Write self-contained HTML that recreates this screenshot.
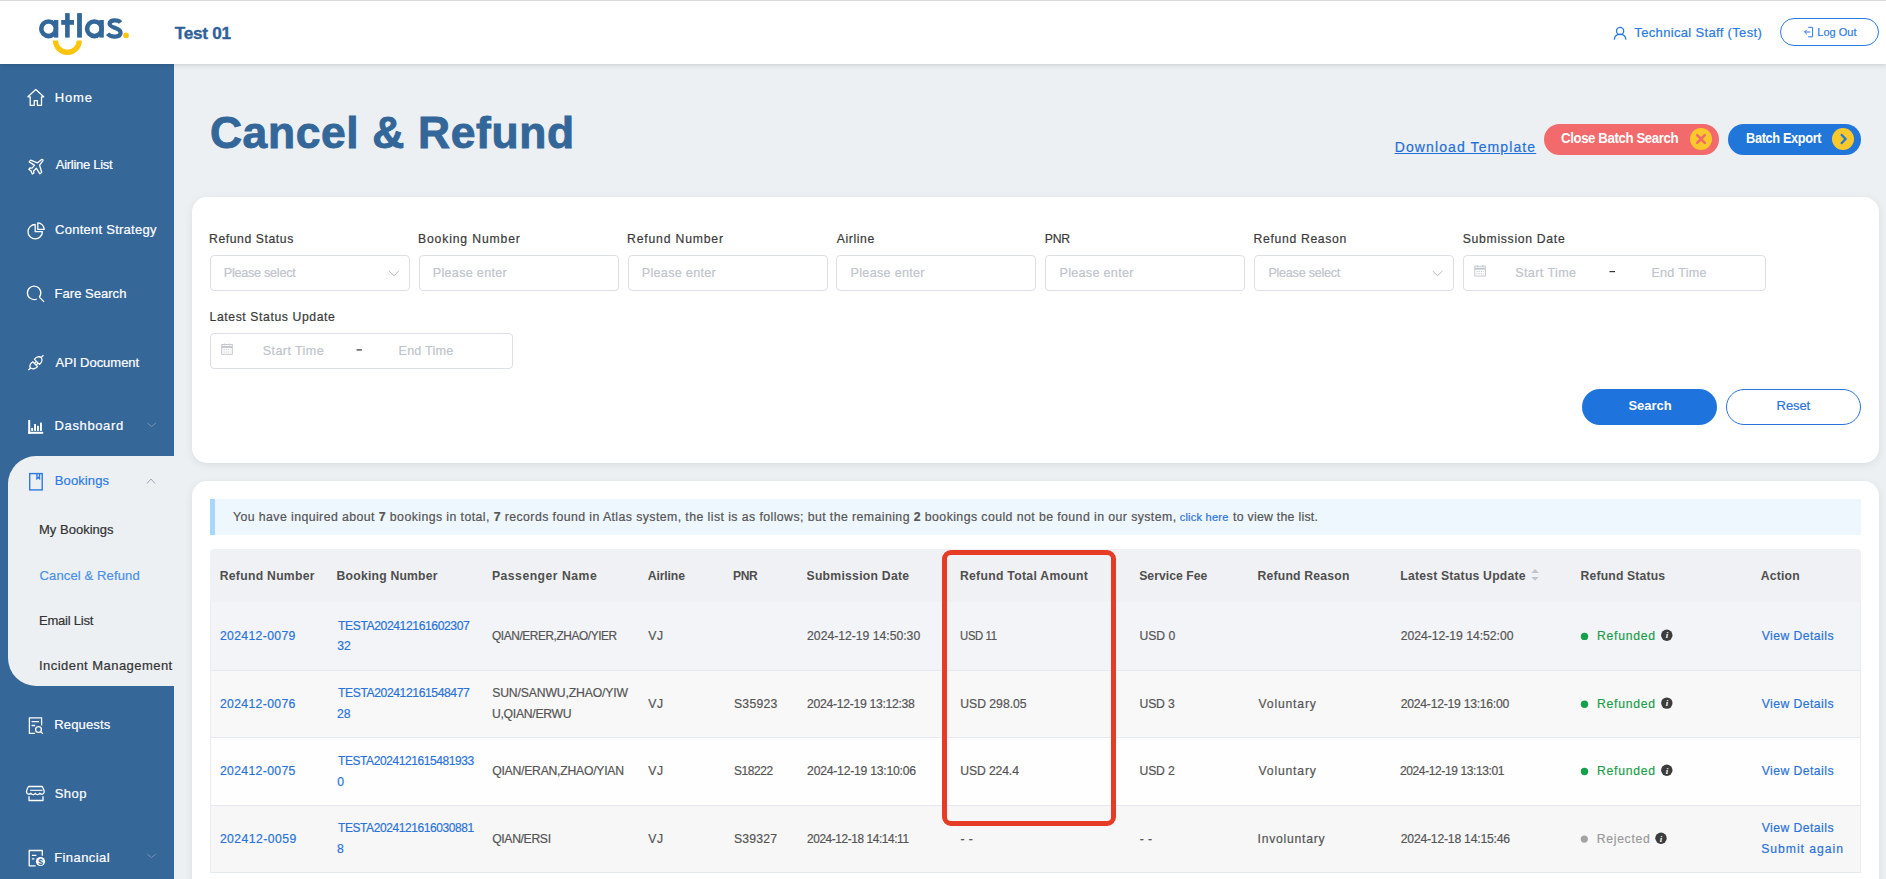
<!DOCTYPE html>
<html><head><meta charset="utf-8">
<style>
*{box-sizing:border-box;margin:0;padding:0}
html,body{width:1886px;height:879px;overflow:hidden}
body{background:#ecf0f3;font-family:"Liberation Sans",sans-serif;position:relative}
.a{position:absolute}
.t{position:absolute;z-index:6;white-space:pre;line-height:normal;font-family:"Liberation Sans",sans-serif}
.inp{position:absolute;top:255px;height:36px;width:200px;border:1px solid #dcdfe6;border-radius:4px;background:#fff}
.row{position:absolute;left:210px;width:1651px;border-bottom:1px solid #e6e9f0;border-left:1px solid #e9edf3;border-right:1px solid #e9edf3}
svg{position:absolute;overflow:visible}
</style></head><body>
<!-- header -->
<div class="a" style="left:0;top:0;width:1886px;height:64px;background:#fff;box-shadow:0 1px 5px rgba(0,0,0,0.16);z-index:2"></div>
<div class="a" style="left:0;top:0;width:1886px;height:1px;background:#d9d9d9;z-index:3"></div>
<!-- sidebar -->
<div class="a" style="left:0;top:64px;width:174px;height:815px;background:#366799"></div>
<div class="a" style="left:8px;top:456px;width:180px;height:230px;background:#ecf0f3;border-radius:28px 0 0 28px"></div>

<!-- form card -->
<div class="a" style="left:192px;top:197px;width:1687px;height:266px;background:#fff;border-radius:15px;box-shadow:0 2px 8px rgba(0,0,0,0.08)"></div>
<!-- table card -->
<div class="a" style="left:192px;top:481px;width:1687px;height:420px;background:#fff;border-radius:15px;box-shadow:0 2px 8px rgba(0,0,0,0.08)"></div>

<!-- inputs -->
<div class="inp" style="left:210px"></div>
<div class="inp" style="left:419px"></div>
<div class="inp" style="left:628px"></div>
<div class="inp" style="left:836px"></div>
<div class="inp" style="left:1045px"></div>
<div class="inp" style="left:1254px"></div>
<div class="inp" style="left:1463px;width:303px"></div>
<div class="inp" style="left:210px;top:333px;width:303px"></div>

<!-- buttons -->
<div class="a" style="left:1582px;top:389px;width:135px;height:36px;border-radius:18px;background:#1f73dc"></div>
<div class="a" style="left:1726px;top:389px;width:135px;height:36px;border-radius:18px;border:1px solid #2a73d9;background:#fff"></div>
<div class="a" style="left:1544px;top:124px;width:175px;height:31px;border-radius:16px;background:#f26a6b"></div>
<div class="a" style="left:1728px;top:124px;width:133px;height:31px;border-radius:16px;background:#2176d9"></div>
<div class="a" style="left:1690px;top:128px;width:22px;height:22px;border-radius:11px;background:#fbc82b"></div>
<div class="a" style="left:1832px;top:128px;width:22px;height:22px;border-radius:11px;background:#fbc82b"></div>
<div class="a" style="z-index:5;left:1780px;top:18px;width:99px;height:28px;border-radius:14px;border:1px solid #2a7ae2"></div>

<!-- alert -->
<div class="a" style="left:210px;top:499px;width:1651px;height:36px;background:#eef6fe"></div>
<div class="a" style="left:210px;top:499px;width:5px;height:36px;background:#a9d6fb"></div>

<!-- table -->
<div class="a" style="left:210px;top:549px;width:1651px;height:53px;background:#eff1f5;border-radius:4px 4px 0 0"></div>
<div class="row" style="top:602px;height:68.5px;background:#f2f4f8"></div>
<div class="row" style="top:670.5px;height:67px;background:#f8f8f9"></div>
<div class="row" style="top:737.5px;height:68px;background:#fefefe"></div>
<div class="row" style="top:805.5px;height:67.5px;background:#f7f7f8"></div>
<div class="row" style="top:873px;height:10px;background:#fff;border:none"></div>

<!-- red box -->
<div class="a" style="left:942px;top:550px;width:174px;height:276px;border:5px solid #e63c26;border-radius:9px;z-index:5"></div>

<svg width="1886" height="879" style="left:0;top:0;z-index:7" viewBox="0 0 1886 879">
<!-- logo -->
<g fill="#336699">
  <circle cx="48.6" cy="28.8" r="7.3" fill="none" stroke="#336699" stroke-width="4.6"/>
  <rect x="53.8" y="20" width="4.5" height="17.6"/>
  <rect x="65.1" y="13.1" width="4.6" height="24.5"/>
  <rect x="61.2" y="20" width="12.8" height="4.8"/>
  <rect x="77.1" y="13.1" width="4.8" height="24.5"/>
  <circle cx="94.4" cy="28.8" r="7.3" fill="none" stroke="#336699" stroke-width="4.6"/>
  <rect x="99.3" y="20" width="4.5" height="17.6"/>
  <path d="M120.6 22.6 C118.5 19.8 110.2 19.2 109.6 23.6 C109 28.2 120.8 27.2 120.6 32.6 C120.4 38 110.6 37.6 107.6 33.8" fill="none" stroke="#336699" stroke-width="4.2"/>
</g>
<circle cx="126" cy="35.3" r="2.9" fill="#fcc40d"/>
<path d="M55.5 40.4 A11.9 11.9 0 0 0 79.3 40.4" fill="none" stroke="#fcc40d" stroke-width="5.2"/>

<!-- header user icon -->
<g fill="none" stroke="#2a7ae2" stroke-width="1.3">
  <circle cx="1620.1" cy="30.9" r="3.6"/>
  <path d="M1614.3 39.6 C1614.5 35.8 1617 34.3 1620.1 34.3 C1623.2 34.3 1625.7 35.8 1625.9 39.6"/>
</g>
<!-- logout icon -->
<g fill="none" stroke="#2a7ae2" stroke-width="1">
  <path d="M1808.2 27.3 H1812.6 V36.8 H1808.2"/>
  <path d="M1810.3 32 H1804.6 M1806.8 29.8 L1804.6 32 L1806.8 34.2"/>
</g>

<!-- sidebar icons -->
<g fill="none" stroke="#fff" stroke-width="1.3" stroke-linejoin="round">
  <path d="M27.9 96.8 L35.8 89.6 L43.7 96.8 L41.5 96.8 L41.5 105.3 L37.4 105.3 L37.4 100.6 L34.3 100.6 L34.3 105.3 L30.2 105.3 L30.2 96.8 Z"/>
  <!-- plane -->
  <path d="M37.3 162.9 L41.6 159.6 C42.6 159 43.4 159.8 42.8 160.8 L39.6 165.2 L41.7 172.2 L39.9 173.9 L36.4 168.3 L33.6 171 L33.9 173 L32.3 174 L31 170.9 L28.8 169.3 L29.9 167.8 L31.8 168.2 L34.6 165.4 L29.2 161.9 L30.7 160.1 Z"/>
  <!-- pie -->
  <path d="M35.2 224.5 A7.2 7.2 0 1 0 42.4 231.7 L35.2 231.7 Z"/>
  <path d="M37.8 222.9 L37.8 229.4 L44.2 229.4 A6.5 6.5 0 0 0 37.8 222.9 Z"/>
  <!-- search -->
  <path d="M36.8 299 A6.7 6.7 0 1 1 39.3 297.1"/>
  <path d="M39.4 297.1 L44.1 301.9"/>
  <!-- plug -->
  <path d="M34.4 359.4 L39.4 364.4 C41.9 362.3 42.9 359.3 41.1 357.6 C39.3 355.9 36.3 356.9 34.4 359.4 Z"/>
  <path d="M32.8 361.8 L37.6 366.6 C35.4 368.9 32.3 369.6 30.6 367.9 C28.9 366.1 30.4 363.4 32.8 361.8 Z"/>
  <path d="M41.3 357.4 L43.4 355.3 M30.5 368 L28.4 370.1 M34.3 363.6 L36.2 361.7 M36 365.2 L37.9 363.3"/>
  <!-- requests -->
  <path d="M35 733.4 H29.4 V717.8 H41.6 V725.5"/>
  <path d="M31.6 721.6 H39 M31.6 725.5 H35.2"/>
  <circle cx="38.5" cy="729.5" r="2.9"/>
  <path d="M40.6 731.6 L42.8 733.8"/>
  <!-- shop -->
  <path d="M30.4 786.5 H42.2 C43.7 789 44.5 791 44.1 792.3 C43.6 794.3 41.2 794.9 39.7 793.3 C38.8 795 36.4 795.3 35.3 793.3 C34.2 795.3 31.8 795.1 30.9 793.3 C29.4 794.9 27 794.3 26.6 792.3 C26.2 791 27 789 28.6 786.5 Z" />
  <path d="M30.1 790.3 H42.6" stroke-width="1.1"/>
  <path d="M29 796.3 V800.5 H43 V796.3"/>
  <!-- financial -->
  <path d="M35.6 865.8 H29.2 V850.5 H42.3 V855.8"/>
  <path d="M31.9 855.3 H36.4 M31.9 858.9 H34.4"/>
</g>
<!-- dashboard chart (filled) -->
<g fill="#fff">
  <rect x="28.2" y="420" width="2" height="13.8"/>
  <rect x="28.2" y="431.8" width="15" height="2"/>
  <rect x="31.2" y="427.9" width="1.9" height="3"/>
  <rect x="34.1" y="424" width="1.9" height="6.9"/>
  <rect x="37" y="425.8" width="1.9" height="5.1"/>
  <rect x="40" y="422.6" width="1.9" height="8.3"/>
</g>
<!-- financial coin -->
<circle cx="40.5" cy="861.5" r="4.6" fill="#fff"/>
<text x="40.5" y="864.6" font-family="Liberation Sans" font-weight="700" font-size="8.5" fill="#366799" text-anchor="middle">$</text>
<!-- bookings icon -->
<g fill="none" stroke="#2f7be5" stroke-width="1.4">
  <rect x="29.7" y="473.6" width="12.5" height="16.3"/>
  <path d="M36.9 473.6 V478.6 L38.2 477.4 L39.5 478.6 V473.6"/>
</g>
<!-- sidebar chevrons -->
<g fill="none" stroke-width="1" >
  <path d="M147.3 423 L151.6 426.5 L155.9 423" stroke="#7193bb"/>
  <path d="M146.9 483.6 L151 479 L155.1 483.6" stroke="#a0a8b4"/>
  <path d="M147.2 854 L151.5 857.6 L155.8 854" stroke="#7193bb"/>
</g>

<!-- close X and export chevron -->
<path d="M1697.2 135.2 L1704.8 142.8 M1704.8 135.2 L1697.2 142.8" stroke="#f26a6b" stroke-width="2.6" stroke-linecap="round"/>
<path d="M1841 134.2 L1845.6 139 L1841 143.8" fill="none" stroke="#2176d9" stroke-width="2.2"/>

<!-- select chevrons -->
<g fill="none" stroke="#b3b8c0" stroke-width="1">
  <path d="M389.1 271 L394 275.7 L398.8 271"/>
  <path d="M1432.7 271 L1437.6 275.7 L1442.4 271"/>
</g>
<!-- calendars -->
<g fill="none" stroke="#c5c9cf" stroke-width="1">
  <rect x="221.7" y="344.5" width="10.6" height="9.8"/>
  <path d="M221.7 347 H232.3" stroke-width="2"/>
  <path d="M224.4 343.5 V345.5 M229.6 343.5 V345.5"/>
  <path d="M223.5 349.7 H230.5 M223.5 352 H230.5" stroke-dasharray="1.2 0.9"/>
  <rect x="1474.8" y="266.2" width="10.6" height="9.8"/>
  <path d="M1474.8 268.7 H1485.4" stroke-width="2"/>
  <path d="M1477.5 265.2 V267.2 M1482.7 265.2 V267.2"/>
  <path d="M1476.6 271.4 H1483.6 M1476.6 273.7 H1483.6" stroke-dasharray="1.2 0.9"/>
</g>
<!-- dashes -->
<rect x="1609.5" y="271" width="5.5" height="1.2" fill="#333"/>
<rect x="356.6" y="349.3" width="5.3" height="1.2" fill="#333"/>
<!-- sort icon -->
<path d="M1531.3 573 L1535 569 L1538.8 573 Z M1531.3 577 L1535 580.8 L1538.8 577 Z" fill="#c0c4cc"/>

<!-- status dots and info icons -->
<g fill="#16a04a">
  <circle cx="1584.5" cy="636.4" r="3.7"/>
  <circle cx="1584.5" cy="704.3" r="3.7"/>
  <circle cx="1584.5" cy="771.5" r="3.7"/>
</g>
<circle cx="1584.3" cy="839.1" r="3.6" fill="#a3a3a3"/>
<g fill="#3c3c3c">
  <circle cx="1666.8" cy="635.2" r="5.7"/>
  <circle cx="1666.8" cy="703.1" r="5.7"/>
  <circle cx="1666.8" cy="770.3" r="5.7"/>
  <circle cx="1661" cy="838.3" r="5.7"/>
</g>
<g fill="#fff" font-family="Liberation Serif" font-style="italic" font-weight="700" font-size="9" text-anchor="middle">
  <text x="1666.9" y="638.4">i</text>
  <text x="1666.9" y="706.3">i</text>
  <text x="1666.9" y="773.5">i</text>
  <text x="1661.1" y="841.5">i</text>
</g>
</svg>


<span class="t" style="left:174.80px;top:22.83px;font-size:17.2px;font-weight:700;color:#2f619a;letter-spacing:-0.267px;-webkit-text-stroke:0.35px #2f619a;">Test 01</span>
<span class="t" style="-webkit-text-stroke:0.2px currentColor;left:1634.35px;top:25.23px;font-size:13px;font-weight:400;color:#2a7ae2;letter-spacing:0.333px;">Technical Staff (Test)</span>
<span class="t" style="-webkit-text-stroke:0.2px currentColor;left:1817.25px;top:26.05px;font-size:11px;font-weight:400;color:#2a7ae2;letter-spacing:0.025px;">Log Out</span>
<span class="t" style="-webkit-text-stroke:0.2px currentColor;left:54.80px;top:89.83px;font-size:13px;font-weight:400;color:#ffffff;letter-spacing:0.817px;">Home</span>
<span class="t" style="-webkit-text-stroke:0.2px currentColor;left:55.80px;top:157.44px;font-size:13px;font-weight:400;color:#ffffff;letter-spacing:-0.291px;">Airline List</span>
<span class="t" style="-webkit-text-stroke:0.2px currentColor;left:55.10px;top:221.83px;font-size:13px;font-weight:400;color:#ffffff;letter-spacing:0.250px;">Content Strategy</span>
<span class="t" style="-webkit-text-stroke:0.2px currentColor;left:54.60px;top:285.63px;font-size:13px;font-weight:400;color:#ffffff;letter-spacing:0.025px;">Fare Search</span>
<span class="t" style="-webkit-text-stroke:0.2px currentColor;left:55.60px;top:355.04px;font-size:13px;font-weight:400;color:#ffffff;letter-spacing:-0.023px;">API Document</span>
<span class="t" style="-webkit-text-stroke:0.2px currentColor;left:54.60px;top:418.13px;font-size:13px;font-weight:400;color:#ffffff;letter-spacing:0.619px;">Dashboard</span>
<span class="t" style="-webkit-text-stroke:0.2px currentColor;left:54.80px;top:472.63px;font-size:13px;font-weight:400;color:#2f7be5;letter-spacing:0.107px;">Bookings</span>
<span class="t" style="-webkit-text-stroke:0.2px currentColor;left:39.00px;top:521.94px;font-size:13px;font-weight:400;color:#333333;letter-spacing:0.020px;">My Bookings</span>
<span class="t" style="-webkit-text-stroke:0.2px currentColor;left:39.50px;top:567.84px;font-size:13px;font-weight:400;color:#4a90e8;letter-spacing:0.132px;">Cancel &amp; Refund</span>
<span class="t" style="-webkit-text-stroke:0.2px currentColor;left:39.00px;top:612.84px;font-size:13px;font-weight:400;color:#333333;letter-spacing:-0.228px;">Email List</span>
<span class="t" style="-webkit-text-stroke:0.2px currentColor;left:39.00px;top:657.84px;font-size:13px;font-weight:400;color:#333333;letter-spacing:0.456px;">Incident Management</span>
<span class="t" style="-webkit-text-stroke:0.2px currentColor;left:54.20px;top:716.84px;font-size:13px;font-weight:400;color:#ffffff;letter-spacing:0.171px;">Requests</span>
<span class="t" style="-webkit-text-stroke:0.2px currentColor;left:54.70px;top:785.63px;font-size:13px;font-weight:400;color:#ffffff;letter-spacing:0.500px;">Shop</span>
<span class="t" style="-webkit-text-stroke:0.2px currentColor;left:54.20px;top:849.74px;font-size:13px;font-weight:400;color:#ffffff;letter-spacing:0.425px;">Financial</span>
<span class="t" style="left:209.90px;top:108.42px;font-size:44.4px;font-weight:700;color:#336699;letter-spacing:0.646px;-webkit-text-stroke:0.9px #336699;">Cancel &amp; Refund</span>
<span class="t" style="-webkit-text-stroke:0.2px currentColor;left:1394.70px;top:138.63px;font-size:14px;font-weight:400;color:#1f6fd8;letter-spacing:1.109px;text-decoration:underline;text-underline-offset:1px;">Download Template</span>
<span class="t" style="left:1561.00px;top:130.81px;font-size:13.8px;font-weight:700;color:#ffffff;letter-spacing:-0.400px;transform:scaleX(0.9570);transform-origin:1.00px 0;">Close Batch Search</span>
<span class="t" style="left:1745.50px;top:130.81px;font-size:13.8px;font-weight:700;color:#ffffff;letter-spacing:-0.400px;transform:scaleX(0.9262);transform-origin:1.00px 0;">Batch Export</span>
<span class="t" style="-webkit-text-stroke:0.2px currentColor;left:209.00px;top:231.56px;font-size:12.2px;font-weight:400;color:#3a3a3a;letter-spacing:0.583px;">Refund Status</span>
<span class="t" style="-webkit-text-stroke:0.2px currentColor;left:418.00px;top:231.56px;font-size:12.2px;font-weight:400;color:#3a3a3a;letter-spacing:0.850px;">Booking Number</span>
<span class="t" style="-webkit-text-stroke:0.2px currentColor;left:627.00px;top:231.56px;font-size:12.2px;font-weight:400;color:#3a3a3a;letter-spacing:0.833px;">Refund Number</span>
<span class="t" style="-webkit-text-stroke:0.2px currentColor;left:836.80px;top:231.56px;font-size:12.2px;font-weight:400;color:#3a3a3a;letter-spacing:0.583px;">Airline</span>
<span class="t" style="-webkit-text-stroke:0.2px currentColor;left:1044.70px;top:231.56px;font-size:12.2px;font-weight:400;color:#3a3a3a;letter-spacing:-0.125px;">PNR</span>
<span class="t" style="-webkit-text-stroke:0.2px currentColor;left:1253.60px;top:231.56px;font-size:12.2px;font-weight:400;color:#3a3a3a;letter-spacing:0.667px;">Refund Reason</span>
<span class="t" style="-webkit-text-stroke:0.2px currentColor;left:1462.80px;top:231.56px;font-size:12.2px;font-weight:400;color:#3a3a3a;letter-spacing:0.696px;">Submission Date</span>
<span class="t" style="-webkit-text-stroke:0.2px currentColor;left:223.80px;top:265.60px;font-size:12.6px;font-weight:400;color:#c0c4cc;letter-spacing:-0.250px;">Please select</span>
<span class="t" style="-webkit-text-stroke:0.2px currentColor;left:432.80px;top:265.60px;font-size:12.6px;font-weight:400;color:#c0c4cc;letter-spacing:0.291px;">Please enter</span>
<span class="t" style="-webkit-text-stroke:0.2px currentColor;left:641.80px;top:265.60px;font-size:12.6px;font-weight:400;color:#c0c4cc;letter-spacing:0.291px;">Please enter</span>
<span class="t" style="-webkit-text-stroke:0.2px currentColor;left:850.60px;top:265.60px;font-size:12.6px;font-weight:400;color:#c0c4cc;letter-spacing:0.291px;">Please enter</span>
<span class="t" style="-webkit-text-stroke:0.2px currentColor;left:1059.50px;top:265.60px;font-size:12.6px;font-weight:400;color:#c0c4cc;letter-spacing:0.291px;">Please enter</span>
<span class="t" style="-webkit-text-stroke:0.2px currentColor;left:1268.40px;top:265.60px;font-size:12.6px;font-weight:400;color:#c0c4cc;letter-spacing:-0.250px;">Please select</span>
<span class="t" style="-webkit-text-stroke:0.2px currentColor;left:1515.20px;top:265.60px;font-size:12.6px;font-weight:400;color:#c0c4cc;letter-spacing:0.389px;">Start Time</span>
<span class="t" style="-webkit-text-stroke:0.2px currentColor;left:1651.40px;top:265.60px;font-size:12.6px;font-weight:400;color:#c0c4cc;letter-spacing:0.271px;">End Time</span>
<span class="t" style="-webkit-text-stroke:0.2px currentColor;left:209.50px;top:310.26px;font-size:12.2px;font-weight:400;color:#3a3a3a;letter-spacing:0.605px;">Latest Status Update</span>
<span class="t" style="-webkit-text-stroke:0.2px currentColor;left:262.80px;top:343.60px;font-size:12.6px;font-weight:400;color:#c0c4cc;letter-spacing:0.389px;">Start Time</span>
<span class="t" style="-webkit-text-stroke:0.2px currentColor;left:398.50px;top:343.60px;font-size:12.6px;font-weight:400;color:#c0c4cc;letter-spacing:0.229px;">End Time</span>
<span class="t" style="left:1628.40px;top:398.44px;font-size:13px;font-weight:700;color:#ffffff;letter-spacing:0.000px;">Search</span>
<span class="t" style="-webkit-text-stroke:0.2px currentColor;left:1776.60px;top:398.44px;font-size:13px;font-weight:400;color:#2a73d9;letter-spacing:-0.087px;">Reset</span>
<span class="t" style="-webkit-text-stroke:0.2px currentColor;left:232.95px;top:509.67px;font-size:12.3px;font-weight:400;color:#555555;letter-spacing:0.425px;">You have inquired about <b>7</b> bookings in total, <b>7</b> records found in Atlas system, the list is as follows; but the remaining <b>2</b> bookings could not be found in our system,</span>
<span class="t" style="-webkit-text-stroke:0.2px currentColor;left:1179.65px;top:510.65px;font-size:11px;font-weight:400;color:#2a73d9;letter-spacing:0.239px;">click here</span>
<span class="t" style="-webkit-text-stroke:0.2px currentColor;left:1233.00px;top:509.67px;font-size:12.3px;font-weight:400;color:#555555;letter-spacing:0.266px;">to view the list.</span>
<span class="t" style="left:219.65px;top:568.96px;font-size:12.2px;font-weight:700;color:#4f4f4f;letter-spacing:0.292px;">Refund Number</span>
<span class="t" style="left:336.55px;top:568.96px;font-size:12.2px;font-weight:700;color:#4f4f4f;letter-spacing:0.215px;">Booking Number</span>
<span class="t" style="left:491.95px;top:568.96px;font-size:12.2px;font-weight:700;color:#4f4f4f;letter-spacing:0.500px;">Passenger Name</span>
<span class="t" style="left:647.75px;top:568.96px;font-size:12.2px;font-weight:700;color:#4f4f4f;letter-spacing:-0.117px;">Airline</span>
<span class="t" style="left:733.00px;top:568.96px;font-size:12.2px;font-weight:700;color:#4f4f4f;letter-spacing:-0.400px;transform:scaleX(0.9885);transform-origin:1.00px 0;">PNR</span>
<span class="t" style="left:806.50px;top:568.96px;font-size:12.2px;font-weight:700;color:#4f4f4f;letter-spacing:0.264px;">Submission Date</span>
<span class="t" style="left:959.95px;top:568.96px;font-size:12.2px;font-weight:700;color:#4f4f4f;letter-spacing:0.297px;">Refund Total Amount</span>
<span class="t" style="left:1139.20px;top:568.96px;font-size:12.2px;font-weight:700;color:#4f4f4f;letter-spacing:0.045px;">Service Fee</span>
<span class="t" style="left:1257.55px;top:568.96px;font-size:12.2px;font-weight:700;color:#4f4f4f;letter-spacing:0.208px;">Refund Reason</span>
<span class="t" style="left:1400.25px;top:568.96px;font-size:12.2px;font-weight:700;color:#4f4f4f;letter-spacing:0.211px;">Latest Status Update</span>
<span class="t" style="left:1580.55px;top:568.96px;font-size:12.2px;font-weight:700;color:#4f4f4f;letter-spacing:0.162px;">Refund Status</span>
<span class="t" style="left:1760.75px;top:568.96px;font-size:12.2px;font-weight:700;color:#4f4f4f;letter-spacing:0.200px;">Action</span>
<span class="t" style="-webkit-text-stroke:0.2px currentColor;left:219.90px;top:628.86px;font-size:12.2px;font-weight:400;color:#2a73d9;letter-spacing:0.365px;">202412-0079</span>
<span class="t" style="-webkit-text-stroke:0.2px currentColor;left:337.60px;top:618.76px;font-size:12.2px;font-weight:400;color:#2a73d9;letter-spacing:-0.400px;transform:scaleX(0.9952);transform-origin:0.00px 0;">TESTA202412161602307</span>
<span class="t" style="-webkit-text-stroke:0.2px currentColor;left:337.35px;top:638.86px;font-size:12.2px;font-weight:400;color:#2a73d9;letter-spacing:0.000px;">32</span>
<span class="t" style="-webkit-text-stroke:0.2px currentColor;left:491.70px;top:628.86px;font-size:12.2px;font-weight:400;color:#555555;letter-spacing:-0.400px;transform:scaleX(0.9701);transform-origin:1.00px 0;">QIAN/ERER,ZHAO/YIER</span>
<span class="t" style="-webkit-text-stroke:0.2px currentColor;left:648.30px;top:628.86px;font-size:12.2px;font-weight:400;color:#555555;letter-spacing:0.500px;">VJ</span>
<span class="t" style="-webkit-text-stroke:0.2px currentColor;left:807.10px;top:628.86px;font-size:12.2px;font-weight:400;color:#555555;letter-spacing:-0.006px;">2024-12-19 14:50:30</span>
<span class="t" style="-webkit-text-stroke:0.2px currentColor;left:959.75px;top:628.86px;font-size:12.2px;font-weight:400;color:#555555;letter-spacing:-0.400px;transform:scaleX(0.9277);transform-origin:1.25px 0;">USD 11</span>
<span class="t" style="-webkit-text-stroke:0.2px currentColor;left:1139.55px;top:628.86px;font-size:12.2px;font-weight:400;color:#555555;letter-spacing:-0.062px;">USD 0</span>
<span class="t" style="-webkit-text-stroke:0.2px currentColor;left:1400.80px;top:628.86px;font-size:12.2px;font-weight:400;color:#555555;letter-spacing:-0.031px;">2024-12-19 14:52:00</span>
<span class="t" style="-webkit-text-stroke:0.2px currentColor;left:1597.00px;top:628.86px;font-size:12.2px;font-weight:400;color:#1e9e4a;letter-spacing:0.743px;">Refunded</span>
<span class="t" style="-webkit-text-stroke:0.2px currentColor;left:1761.70px;top:628.86px;font-size:12.2px;font-weight:400;color:#2a73d9;letter-spacing:0.455px;">View Details</span>
<span class="t" style="-webkit-text-stroke:0.2px currentColor;left:219.90px;top:696.76px;font-size:12.2px;font-weight:400;color:#2a73d9;letter-spacing:0.365px;">202412-0076</span>
<span class="t" style="-webkit-text-stroke:0.2px currentColor;left:337.60px;top:685.66px;font-size:12.2px;font-weight:400;color:#2a73d9;letter-spacing:-0.400px;transform:scaleX(0.9952);transform-origin:0.00px 0;">TESTA202412161548477</span>
<span class="t" style="-webkit-text-stroke:0.2px currentColor;left:337.10px;top:706.76px;font-size:12.2px;font-weight:400;color:#2a73d9;letter-spacing:0.000px;">28</span>
<span class="t" style="-webkit-text-stroke:0.2px currentColor;left:492.20px;top:685.66px;font-size:12.2px;font-weight:400;color:#555555;letter-spacing:-0.135px;">SUN/SANWU,ZHAO/YIW</span>
<span class="t" style="-webkit-text-stroke:0.2px currentColor;left:491.95px;top:706.76px;font-size:12.2px;font-weight:400;color:#555555;letter-spacing:-0.275px;">U,QIAN/ERWU</span>
<span class="t" style="-webkit-text-stroke:0.2px currentColor;left:648.30px;top:696.76px;font-size:12.2px;font-weight:400;color:#555555;letter-spacing:0.500px;">VJ</span>
<span class="t" style="-webkit-text-stroke:0.2px currentColor;left:734.00px;top:696.76px;font-size:12.2px;font-weight:400;color:#555555;letter-spacing:0.240px;">S35923</span>
<span class="t" style="-webkit-text-stroke:0.2px currentColor;left:807.10px;top:696.76px;font-size:12.2px;font-weight:400;color:#555555;letter-spacing:-0.303px;">2024-12-19 13:12:38</span>
<span class="t" style="-webkit-text-stroke:0.2px currentColor;left:960.25px;top:696.76px;font-size:12.2px;font-weight:400;color:#555555;letter-spacing:-0.006px;">USD 298.05</span>
<span class="t" style="-webkit-text-stroke:0.2px currentColor;left:1139.55px;top:696.76px;font-size:12.2px;font-weight:400;color:#555555;letter-spacing:-0.188px;">USD 3</span>
<span class="t" style="-webkit-text-stroke:0.2px currentColor;left:1258.60px;top:696.76px;font-size:12.2px;font-weight:400;color:#555555;letter-spacing:0.806px;">Voluntary</span>
<span class="t" style="-webkit-text-stroke:0.2px currentColor;left:1400.80px;top:696.76px;font-size:12.2px;font-weight:400;color:#555555;letter-spacing:-0.261px;">2024-12-19 13:16:00</span>
<span class="t" style="-webkit-text-stroke:0.2px currentColor;left:1597.00px;top:696.76px;font-size:12.2px;font-weight:400;color:#1e9e4a;letter-spacing:0.743px;">Refunded</span>
<span class="t" style="-webkit-text-stroke:0.2px currentColor;left:1761.70px;top:696.76px;font-size:12.2px;font-weight:400;color:#2a73d9;letter-spacing:0.455px;">View Details</span>
<span class="t" style="-webkit-text-stroke:0.2px currentColor;left:219.90px;top:764.16px;font-size:12.2px;font-weight:400;color:#2a73d9;letter-spacing:0.365px;">202412-0075</span>
<span class="t" style="-webkit-text-stroke:0.2px currentColor;left:337.60px;top:753.76px;font-size:12.2px;font-weight:400;color:#2a73d9;letter-spacing:-0.400px;transform:scaleX(0.9809);transform-origin:0.00px 0;">TESTA2024121615481933</span>
<span class="t" style="-webkit-text-stroke:0.2px currentColor;left:337.35px;top:774.66px;font-size:12.2px;font-weight:400;color:#2a73d9;letter-spacing:0.000px;">0</span>
<span class="t" style="-webkit-text-stroke:0.2px currentColor;left:492.20px;top:764.16px;font-size:12.2px;font-weight:400;color:#555555;letter-spacing:-0.236px;">QIAN/ERAN,ZHAO/YIAN</span>
<span class="t" style="-webkit-text-stroke:0.2px currentColor;left:648.30px;top:764.16px;font-size:12.2px;font-weight:400;color:#555555;letter-spacing:0.500px;">VJ</span>
<span class="t" style="-webkit-text-stroke:0.2px currentColor;left:733.50px;top:764.16px;font-size:12.2px;font-weight:400;color:#555555;letter-spacing:-0.400px;transform:scaleX(0.9760);transform-origin:1.00px 0;">S18222</span>
<span class="t" style="-webkit-text-stroke:0.2px currentColor;left:807.10px;top:764.16px;font-size:12.2px;font-weight:400;color:#555555;letter-spacing:-0.236px;">2024-12-19 13:10:06</span>
<span class="t" style="-webkit-text-stroke:0.2px currentColor;left:960.25px;top:764.16px;font-size:12.2px;font-weight:400;color:#555555;letter-spacing:-0.119px;">USD 224.4</span>
<span class="t" style="-webkit-text-stroke:0.2px currentColor;left:1139.55px;top:764.16px;font-size:12.2px;font-weight:400;color:#555555;letter-spacing:-0.188px;">USD 2</span>
<span class="t" style="-webkit-text-stroke:0.2px currentColor;left:1258.60px;top:764.16px;font-size:12.2px;font-weight:400;color:#555555;letter-spacing:0.806px;">Voluntary</span>
<span class="t" style="-webkit-text-stroke:0.2px currentColor;left:1400.30px;top:764.16px;font-size:12.2px;font-weight:400;color:#555555;letter-spacing:-0.400px;transform:scaleX(0.9847);transform-origin:1.00px 0;">2024-12-19 13:13:01</span>
<span class="t" style="-webkit-text-stroke:0.2px currentColor;left:1597.00px;top:764.16px;font-size:12.2px;font-weight:400;color:#1e9e4a;letter-spacing:0.743px;">Refunded</span>
<span class="t" style="-webkit-text-stroke:0.2px currentColor;left:1761.70px;top:764.16px;font-size:12.2px;font-weight:400;color:#2a73d9;letter-spacing:0.455px;">View Details</span>
<span class="t" style="-webkit-text-stroke:0.2px currentColor;left:219.90px;top:831.96px;font-size:12.2px;font-weight:400;color:#2a73d9;letter-spacing:0.450px;">202412-0059</span>
<span class="t" style="-webkit-text-stroke:0.2px currentColor;left:337.60px;top:820.66px;font-size:12.2px;font-weight:400;color:#2a73d9;letter-spacing:-0.400px;transform:scaleX(0.9809);transform-origin:0.00px 0;">TESTA2024121616030881</span>
<span class="t" style="-webkit-text-stroke:0.2px currentColor;left:337.10px;top:841.76px;font-size:12.2px;font-weight:400;color:#2a73d9;letter-spacing:0.000px;">8</span>
<span class="t" style="-webkit-text-stroke:0.2px currentColor;left:492.20px;top:831.96px;font-size:12.2px;font-weight:400;color:#555555;letter-spacing:-0.350px;">QIAN/ERSI</span>
<span class="t" style="-webkit-text-stroke:0.2px currentColor;left:648.30px;top:831.96px;font-size:12.2px;font-weight:400;color:#555555;letter-spacing:0.500px;">VJ</span>
<span class="t" style="-webkit-text-stroke:0.2px currentColor;left:734.00px;top:831.96px;font-size:12.2px;font-weight:400;color:#555555;letter-spacing:0.200px;">S39327</span>
<span class="t" style="-webkit-text-stroke:0.2px currentColor;left:806.60px;top:831.96px;font-size:12.2px;font-weight:400;color:#555555;letter-spacing:-0.400px;transform:scaleX(0.9702);transform-origin:1.00px 0;">2024-12-18 14:14:11</span>
<span class="t" style="-webkit-text-stroke:0.2px currentColor;left:960.50px;top:831.96px;font-size:12.2px;font-weight:400;color:#555555;letter-spacing:4.250px;">--</span>
<span class="t" style="-webkit-text-stroke:0.2px currentColor;left:1139.80px;top:831.96px;font-size:12.2px;font-weight:400;color:#555555;letter-spacing:4.250px;">--</span>
<span class="t" style="-webkit-text-stroke:0.2px currentColor;left:1257.60px;top:831.96px;font-size:12.2px;font-weight:400;color:#555555;letter-spacing:0.740px;">Involuntary</span>
<span class="t" style="-webkit-text-stroke:0.2px currentColor;left:1400.80px;top:831.96px;font-size:12.2px;font-weight:400;color:#555555;letter-spacing:-0.219px;">2024-12-18 14:15:46</span>
<span class="t" style="-webkit-text-stroke:0.2px currentColor;left:1596.80px;top:831.96px;font-size:12.2px;font-weight:400;color:#9a9a9a;letter-spacing:0.686px;">Rejected</span>
<span class="t" style="-webkit-text-stroke:0.2px currentColor;left:1761.70px;top:820.76px;font-size:12.2px;font-weight:400;color:#2a73d9;letter-spacing:0.455px;">View Details</span>
<span class="t" style="-webkit-text-stroke:0.2px currentColor;left:1761.20px;top:841.96px;font-size:12.2px;font-weight:400;color:#2a73d9;letter-spacing:0.968px;">Submit again</span>
</body></html>
